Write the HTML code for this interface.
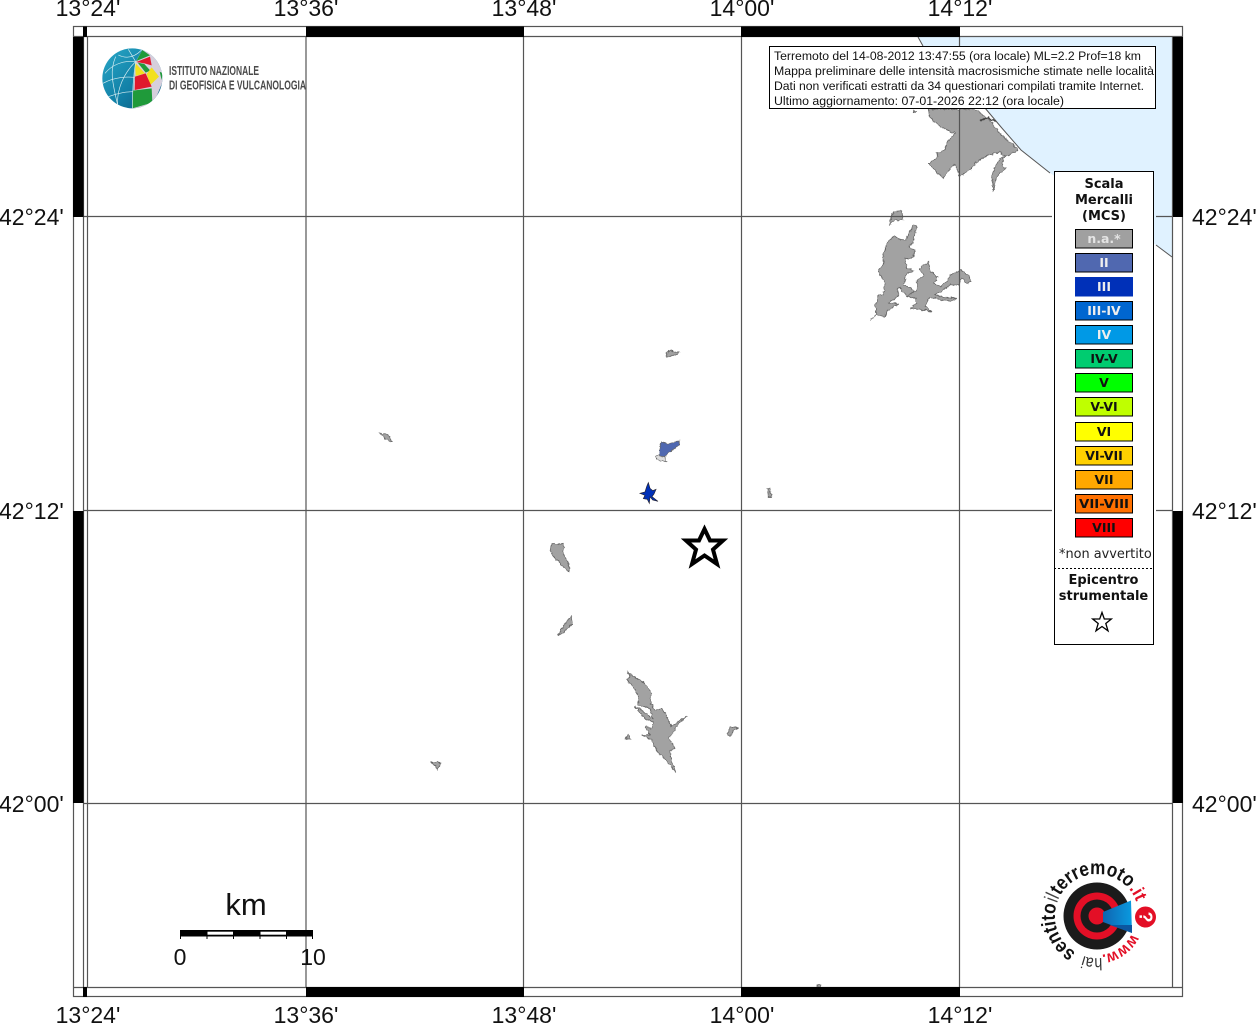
<!DOCTYPE html>
<html><head><meta charset="utf-8"><title>Mappa</title>
<style>html,body{margin:0;padding:0;background:#fff;overflow:hidden}svg{display:block}
.l{font:23px "Liberation Sans",sans-serif;fill:#111}
.t{font:12.2px "Liberation Sans",sans-serif;fill:#111}
.b{font:bold 13px "DejaVu Sans",sans-serif;fill:#111;text-anchor:middle}
.s{font:bold 12.5px "DejaVu Sans",sans-serif;text-anchor:middle}
.land{fill:#a2a2a2;stroke:#666;stroke-width:2.4;stroke-linejoin:round}
</style></head><body>
<svg width="1256" height="1024" viewBox="0 0 1256 1024" xmlns="http://www.w3.org/2000/svg">
<defs>
<clipPath id="g"><circle cx="112" cy="115" r="90"/></clipPath>
<linearGradient id="gb" x1="0" y1="0" x2="1" y2="1"><stop offset="0" stop-color="#2aa9c8"/><stop offset=".55" stop-color="#117fa6"/><stop offset="1" stop-color="#0b4f73"/></linearGradient>
<linearGradient id="fn" x1="0" y1="0" x2="1" y2="0"><stop offset="0" stop-color="#0f64b0"/><stop offset="1" stop-color="#0a9be0"/></linearGradient>
<path id="ring" d="M1134.4,935 A42,42 0 1 1 1134.5,934.8"/>
<path id="ringw" d="M1131.700,933.700 A39,39 0 0 1 1100.400,954.900"/>
<filter id="wig" filterUnits="userSpaceOnUse" x="0" y="0" width="1256" height="1024">
<feTurbulence type="fractalNoise" baseFrequency=".28" numOctaves="2" seed="4" result="n"/>
<feDisplacementMap in="SourceGraphic" in2="n" scale="3.5" xChannelSelector="R" yChannelSelector="G"/>
<feGaussianBlur stdDeviation=".25"/>
</filter>
</defs>
<rect width="1256" height="1024" fill="#fff"/>
<!-- sea -->
<path d="M918,37 L923,45 L985,108 L1001,127 L1021,150 L1050,173 L1156,245 L1172,257 L1172,37 Z" fill="#e0f2ff"/>
<path d="M918,37 L923,46 M985,108 L1001,127 L1021,150 L1050,173 M1156,245 L1172,257" fill="none" stroke="#555" stroke-width="1"/>
<!-- land -->
<g filter="url(#wig)">
<g transform="translate(910,100) scale(.33333)">
<path class="land" d="M55,28 L58,45 70,65 100,85 135,100 110,130 105,150 78,160 85,170 55,190 100,235 133,190 150,228 180,210 195,190 235,165 270,155 285,170 325,150 265,95 240,60 195,28 Z"/>
<path class="land" d="M282,170 L275,200 290,205 262,225 255,245 250,275 245,230 258,195 275,172 Z"/>
<path d="M213,62 L235,52 255,65" fill="none" stroke="#444" stroke-width="4"/>
<path d="M10,30 L20,36 12,38Z" class="land"/>
</g>
<g transform="translate(860,200) scale(.33333)">
<path class="land" d="M100,35 L125,32 130,60 105,60 88,75 95,50 Z"/>
<path class="land" d="M30,358 L50,345 45,320 55,285 70,283 75,250 55,215 70,190 72,160 82,125 105,108 120,118 138,120 143,105 160,75 172,78 165,100 158,130 145,140 165,150 160,172 135,175 140,205 160,212 140,222 130,255 155,265 170,285 140,288 118,262 110,270 118,285 85,310 115,310 80,335 75,350 50,345 Z"/>
<path class="land" d="M178,207 L205,185 212,215 232,232 222,250 240,258 262,245 270,225 300,210 325,225 333,245 320,250 305,235 295,255 270,255 245,275 225,282 240,290 290,295 270,305 225,295 205,295 195,320 215,335 190,330 150,325 170,310 165,295 140,288 170,270 172,240 190,225 Z"/>
</g>
<g transform="translate(610,660) scale(.33333)">
<path class="land" d="M52,33 L70,50 90,60 105,72 125,100 122,130 135,150 155,145 170,170 185,200 210,180 230,170 205,192 190,215 178,235 195,265 180,272 182,290 197,335 175,310 165,295 150,285 130,255 125,240 95,225 120,225 105,200 125,205 130,185 105,175 75,140 95,150 128,178 122,150 105,140 85,135 85,120 82,100 65,75 50,60 60,50 Z"/>
<path class="land" d="M45,237 L55,222 62,237 Z"/>
<path class="land" d="M352,225 L362,200 385,203 372,210 362,228 Z"/>
</g>
<g transform="translate(530,340) scale(.33333)">
<path class="land" d="M408,40 L420,30 435,35 448,38 430,47 412,52 Z"/>
<path d="M375,350 L385,345 405,350 408,365 385,362 Z" fill="#ddd" stroke="#666" stroke-width="2.4"/>
<path d="M388,325 L395,305 415,312 448,302 445,318 420,335 405,350 388,348 Z" fill="#5068b0" stroke="#666" stroke-width="2"/>
<path class="land" d="M712,445 L718,445 725,472 715,470 Z"/>
<path class="land" d="M65,612 L100,610 100,640 120,685 115,695 95,675 70,650 62,635 Z"/>
<path class="land" d="M125,828 L128,850 100,880 85,885 105,850 Z"/>
</g>
<path class="land" style="stroke-width:.8" d="M380,433 L387,434 392,441 386,440 Z"/>
<path class="land" style="stroke-width:.8" d="M431,762 L441,763 437,770 435,765 Z"/>
<path class="land" style="stroke-width:.8" d="M817,985 L821,985 820,987 817,987 Z"/>
</g>
<g transform="translate(530,340) scale(.33333)">
<path d="M330,460 L345,456 350,440 355,428 360,445 368,452 378,448 372,462 366,470 384,484 368,480 360,470 358,490 352,478 340,476 345,466 Z" fill="#0030b8" stroke="#223" stroke-width="2"/>
</g>
<!-- grid -->
<g stroke="#555" stroke-width="1.200" fill="none">
<path d="M83.500,37V987M87.500,37V987M306,37V987M523.500,37V987M741.500,37V987M959.500,37V987M1172.500,37V987"/>
<path d="M83,36.500H1173M83,987.500H1173"/>
<path d="M83,216.500H1052M1156,216.500H1173M83,510.500H1052M1156,510.500H1173M83,803.500H1173"/>
<rect x="73.500" y="26.500" width="1109" height="970"/>
<path d="M73.500,36.500H83M73.500,987.500H83M1173,36.500H1183M1173,987.500H1183"/>
</g>
<!-- frame bars -->
<g fill="#000">
<rect x="83" y="26.500" width="4" height="10.500"/><rect x="306" y="26.500" width="218" height="10.500"/><rect x="741" y="26.500" width="219" height="10.500"/>
<rect x="83" y="987" width="4" height="10"/><rect x="306" y="987" width="218" height="10"/><rect x="741" y="987" width="219" height="10"/>
<rect x="73" y="37" width="10.500" height="180"/><rect x="73" y="511" width="10.500" height="292"/>
<rect x="1173" y="37" width="10" height="180"/><rect x="1173" y="511" width="10" height="292"/>
</g>
<!-- labels -->
<g class="l" text-anchor="middle">
<text x="88" y="16">13°24'</text><text x="306" y="16">13°36'</text><text x="524" y="16">13°48'</text><text x="742" y="16">14°00'</text><text x="960" y="16">14°12'</text>
<text x="88" y="1023">13°24'</text><text x="306" y="1023">13°36'</text><text x="524" y="1023">13°48'</text><text x="742" y="1023">14°00'</text><text x="960" y="1023">14°12'</text>
</g>
<g class="l">
<text x="-1" y="225">42°24'</text><text x="-1" y="519">42°12'</text><text x="-1" y="812">42°00'</text>
<text x="1192" y="225">42°24'</text><text x="1192" y="519">42°12'</text><text x="1192" y="812">42°00'</text>
</g>
<!-- INGV logo -->
<g transform="translate(95,40) scale(.33333)">
<g clip-path="url(#g)">
<rect x="20" y="20" width="190" height="190" fill="url(#gb)"/>
<path d="M122,65 L145,25 205,60 205,120 170,205 112,205 118,110 Z" fill="#d6cfdc"/>
<path d="M124,63 L142,30 165,46 Z" fill="#1f9a3a"/>
<path d="M124,66 L165,50 170,76 148,70 Z" fill="#e0182d"/>
<path d="M120,68 L150,100 122,108 Z" fill="#f2e01e"/>
<path d="M128,68 L148,72 166,92 152,98 Z" fill="#1f9a3a"/>
<path d="M155,102 L170,82 192,110 166,135 Z" fill="#f2e01e"/>
<path d="M120,110 L152,100 170,140 119,150 Z" fill="#e0182d"/>
<path d="M113,152 L170,145 172,188 112,205 Z" fill="#1f9a3a"/>
<path d="M194,95 L203,100 200,120 Z" fill="#1f9a3a"/>
<g fill="none" stroke="#d8eef2" stroke-width="2">
<path d="M122,65 C115,110 112,160 112,205"/>
<path d="M122,65 C85,100 65,150 68,195"/>
<path d="M122,65 C85,60 50,75 30,100"/>
<path d="M62,50 C45,90 50,120 68,195"/>
<path d="M24,130 C60,110 100,110 118,112"/>
<path d="M40,170 C70,158 100,155 114,155"/>
<path d="M122,65 L100,28"/>
<path d="M70,45 C90,55 115,55 140,30"/>
</g>
</g>
</g>
<g font-family="'Liberation Sans',sans-serif" fill="#4a4a4a" font-size="13" font-weight="bold">
<text x="169" y="75" textLength="90" lengthAdjust="spacingAndGlyphs">ISTITUTO NAZIONALE</text>
<text x="169" y="89.500" textLength="137" lengthAdjust="spacingAndGlyphs">DI GEOFISICA E VULCANOLOGIA</text>
</g>
<!-- title box -->
<rect x="769.500" y="46.500" width="386" height="62" fill="#fff" stroke="#000"/>
<g class="t">
<text x="774" y="60" textLength="367" lengthAdjust="spacingAndGlyphs">Terremoto del 14-08-2012 13:47:55 (ora locale) ML=2.2 Prof=18 km</text>
<text x="774" y="75" textLength="380" lengthAdjust="spacingAndGlyphs">Mappa preliminare delle intensità macrosismiche stimate nelle località</text>
<text x="774" y="90" textLength="370" lengthAdjust="spacingAndGlyphs">Dati non verificati estratti da 34 questionari compilati tramite Internet.</text>
<text x="774" y="105" textLength="290" lengthAdjust="spacingAndGlyphs">Ultimo aggiornamento: 07-01-2026 22:12 (ora locale)</text>
</g>
<!-- legend -->
<rect x="1054.500" y="171.500" width="99" height="473" fill="#fff" stroke="#000"/>
<text class="b" x="1104" y="188">Scala</text><text class="b" x="1104" y="204">Mercalli</text><text class="b" x="1104" y="220">(MCS)</text>
<g stroke="#000" stroke-width="1">
<rect x="1075.500" y="229.500" width="57" height="18.500" fill="#a0a0a0"/>
<rect x="1075.500" y="253.500" width="57" height="18.500" fill="#5068b0"/>
<rect x="1075.500" y="277.500" width="57" height="18.500" fill="#0030b8" stroke="#0030b8"/>
<rect x="1075.500" y="301.500" width="57" height="18.500" fill="#0066d0"/>
<rect x="1075.500" y="325.500" width="57" height="18.500" fill="#0099e6"/>
<rect x="1075.500" y="349.500" width="57" height="18.500" fill="#00cc70"/>
<rect x="1075.500" y="373.500" width="57" height="18.500" fill="#00ff00"/>
<rect x="1075.500" y="397.500" width="57" height="18.500" fill="#bfff00"/>
<rect x="1075.500" y="422.500" width="57" height="18.500" fill="#ffff00"/>
<rect x="1075.500" y="446.500" width="57" height="18.500" fill="#ffd000"/>
<rect x="1075.500" y="470.500" width="57" height="18.500" fill="#ffa800"/>
<rect x="1075.500" y="494.500" width="57" height="18.500" fill="#ff7000"/>
<rect x="1075.500" y="518.500" width="57" height="18.500" fill="#ff0000"/>
</g>
<g class="s" fill="#111">
<text x="1104" y="243" fill="#e4e4e4">n.a.*</text>
<text x="1104" y="267" fill="#eee">II</text>
<text x="1104" y="291" fill="#eee">III</text>
<text x="1104" y="315" fill="#eee">III-IV</text>
<text x="1104" y="339" fill="#eee">IV</text>
<text x="1104" y="363">IV-V</text>
<text x="1104" y="387">V</text>
<text x="1104" y="411">V-VI</text>
<text x="1104" y="436">VI</text>
<text x="1104" y="460">VI-VII</text>
<text x="1104" y="484">VII</text>
<text x="1104" y="508" textLength="50" lengthAdjust="spacingAndGlyphs">VII-VIII</text>
<text x="1104" y="532">VIII</text>
</g>
<text x="1059" y="558" font-family="'DejaVu Sans',sans-serif" font-size="12.900" fill="#222">*non avvertito</text>
<path d="M1054,568.500H1152" stroke="#000" stroke-dasharray="2 2"/>
<text class="b" x="1103.500" y="584">Epicentro</text><text class="b" x="1103.500" y="600">strumentale</text>
<path d="M1102,612.500 L1104.300,619 1111.300,619 1105.800,623.500 1108,630.800 1102,626.500 1096,630.800 1098.200,623.500 1092.700,619 1099.700,619 Z" fill="#fff" stroke="#000" stroke-width="1.300"/>
<!-- epicentre star -->
<path d="M704.500,529 L710,540.500 723,540.500 713,549.500 717,564 704.500,555.500 692,564 696,549.500 686,540.500 699,540.500 Z" fill="#fff" stroke="#000" stroke-width="4"/>
<!-- scale bar -->
<g>
<rect x="180" y="930" width="133" height="6.500" fill="#000"/>
<rect x="207.500" y="931.700" width="25.500" height="3" fill="#fff"/>
<rect x="260.500" y="931.700" width="25.500" height="3" fill="#fff"/>
<path d="M180.500,936V939M207,936V939M233.500,936V939M260,936V939M286.500,936V939M312.500,936V939" stroke="#000"/>
<text x="246" y="915" font-family="'Liberation Sans',sans-serif" font-size="31" text-anchor="middle" fill="#111">km</text>
<text x="180" y="965" class="l" text-anchor="middle">0</text>
<text x="313" y="965" class="l" text-anchor="middle">10</text>
</g>
<!-- hai sentito logo -->
<g>
<circle cx="1097" cy="916" r="33.500" fill="#1b1b1b"/>
<circle cx="1097" cy="916" r="23.500" fill="#e30f26"/>
<circle cx="1097" cy="916" r="16.500" fill="#1b1b1b"/>
<circle cx="1097" cy="916" r="8.500" fill="#e30f26"/>
<path d="M1103,912 L1131,900.500 1132,933 1103,922 Z" fill="url(#fn)"/>
<path d="M1110,925 L1132,933 1132,925 Z" fill="#0c56a0"/>
<circle cx="1145.500" cy="917" r="10.500" fill="#e30f26"/>
<text transform="translate(1145.500,917) rotate(90)" y="6" text-anchor="middle" font-family="'Liberation Sans',sans-serif" font-weight="bold" font-size="18" fill="#fff">?</text>
<g font-family="'Liberation Sans',sans-serif" font-size="20" fill="#111">
<text font-size="17" fill="#333"><textPath href="#ring" startOffset="41" textLength="19" lengthAdjust="spacingAndGlyphs">hai</textPath></text>
<text font-weight="bold"><textPath href="#ring" startOffset="68" textLength="56" lengthAdjust="spacingAndGlyphs">sentito</textPath></text>
<text fill="#444"><textPath href="#ring" startOffset="125" textLength="7" lengthAdjust="spacingAndGlyphs">il</textPath></text>
<text font-weight="bold"><textPath href="#ring" startOffset="133" textLength="80" lengthAdjust="spacingAndGlyphs">terremoto</textPath></text>
<text font-weight="bold" font-size="18" fill="#e30f26"><textPath href="#ring" startOffset="214" textLength="15" lengthAdjust="spacingAndGlyphs">.it</textPath></text>
</g>
<text font-family="'Liberation Sans',sans-serif" font-size="16" font-weight="bold" fill="#e30f26"><textPath href="#ringw" textLength="38" lengthAdjust="spacingAndGlyphs">www.</textPath></text>
</g>
</svg>
</body></html>
